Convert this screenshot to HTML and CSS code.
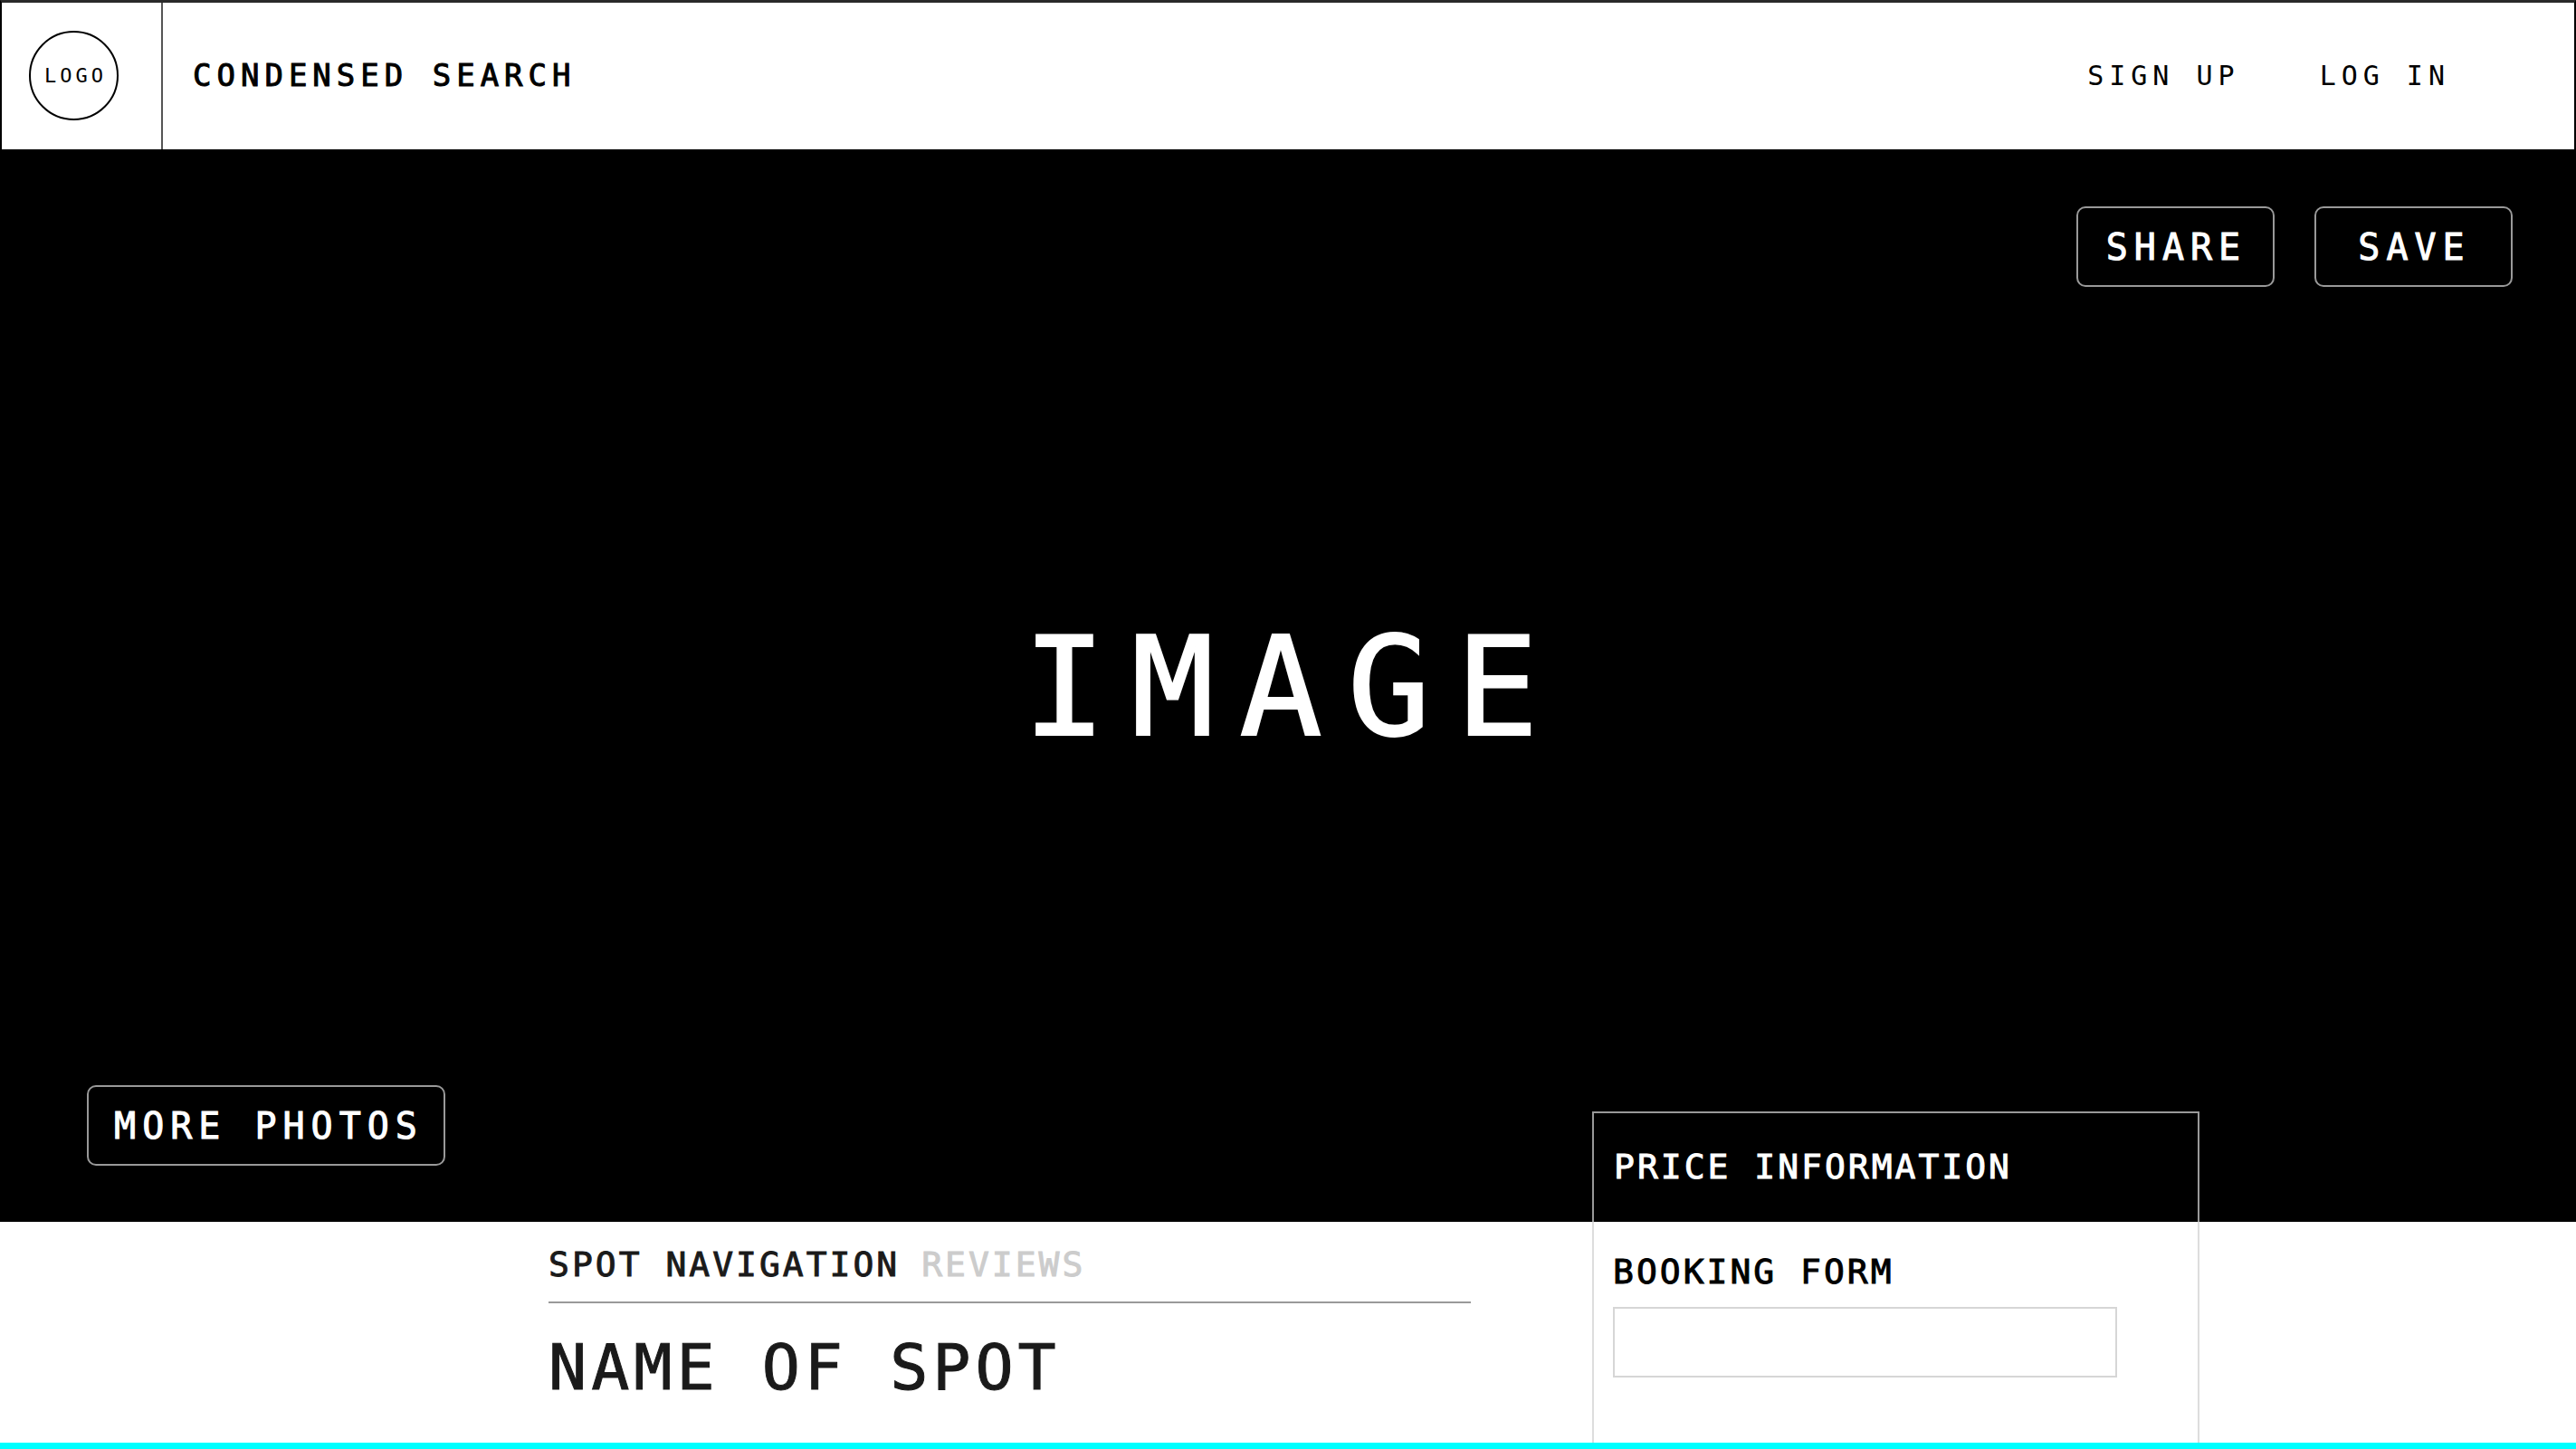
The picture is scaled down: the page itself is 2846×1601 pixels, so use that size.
FILE: index.html
```html
<!DOCTYPE html>
<html lang="en">
<head>
  <meta charset="utf-8">
  <meta name="viewport" content="width=device-width, initial-scale=1">
  <title>Name of Spot</title>
  <link rel="stylesheet" href="styles.css">
</head>
<body>
  <header class="site-header">
    <div class="brand"><a class="logo" href="#">LOGO</a></div>
    <a class="search" href="#">CONDENSED SEARCH</a>
    <nav class="account">
      <a href="#">SIGN UP</a>
      <a href="#">LOG IN</a>
    </nav>
  </header>

  <section class="hero">
    <div class="hero-actions">
      <button class="button" type="button">SHARE</button>
      <button class="button" type="button">SAVE</button>
    </div>
    <div class="hero-title">IMAGE</div>
    <div class="hero-more">
      <button class="button button-wide" type="button">MORE PHOTOS</button>
    </div>
  </section>

  <main class="content">
    <section class="spot">
      <nav class="spot-nav">
        <a href="#">SPOT NAVIGATION</a>
        <a class="muted" href="#">REVIEWS</a>
      </nav>
      <h1 class="spot-name">NAME OF SPOT</h1>
    </section>
    <aside class="booking">
      <h2 class="price">PRICE INFORMATION</h2>
      <form class="booking-form">
        <label for="booking">BOOKING FORM</label>
        <input id="booking" type="text">
      </form>
    </aside>
  </main>

  <footer class="accent"></footer>
</body>
</html>
```

FILE: styles.css
```css
* {
  box-sizing: border-box;
}

body {
  margin: 0;
  min-height: 100vh;
  display: flex;
  flex-direction: column;
  background: #fff;
  color: #000;
  font-family: "DejaVu Sans Mono", "Liberation Mono", monospace;
  -webkit-text-stroke: 1px currentColor;
}

a {
  color: inherit;
  text-decoration: none;
}

/* Header */
.site-header {
  display: flex;
  align-items: stretch;
  height: 167px;
  padding-bottom: 2px;
  border: 2px solid #000;
  border-top: 3px solid #2a2a2a;
  -webkit-text-stroke-width: 0;
}

.brand {
  display: flex;
  align-items: center;
  margin-bottom: -2px;
  padding: 0 47px 2px 30px;
  border-right: 2px solid #555;
}

.logo {
  display: flex;
  align-items: center;
  justify-content: center;
  width: 99px;
  height: 99px;
  padding-left: 4px;
  border: 2px solid #000;
  border-radius: 50%;
  font-size: 22px;
  letter-spacing: 4px;
}

.search {
  display: flex;
  align-items: center;
  margin-left: 33px;
  font-size: 34px;
  letter-spacing: 6px;
  -webkit-text-stroke-width: 1px;
}

.account {
  display: flex;
  align-items: center;
  gap: 88px;
  margin-left: auto;
  padding-right: 137px;
  font-size: 30px;
  letter-spacing: 6px;
}

/* Hero */
.hero {
  display: grid;
  grid-template-rows: 1fr auto 1fr;
  min-height: 1183px;
  padding: 61px 70px 62px 96px;
  background: #000;
  color: #fff;
}

.hero-actions {
  display: flex;
  align-items: flex-start;
  justify-content: flex-end;
  gap: 44px;
}

.hero-title {
  padding: 4px 14px 0 0;
  text-align: center;
  font-size: 152px;
  line-height: 176px;
  letter-spacing: 28px;
  -webkit-text-stroke-width: 2px;
}

.hero-more {
  display: flex;
  align-items: flex-end;
}

.button {
  width: 219px;
  height: 89px;
  padding: 0 0 0 2px;
  border: 2px solid #999;
  border-radius: 10px;
  background: transparent;
  color: inherit;
  font-family: inherit;
  font-size: 40px;
  letter-spacing: 7px;
}

.button-wide {
  width: 396px;
  padding-left: 6px;
}

/* Spot details and booking card */
.content {
  flex: 1;
  display: grid;
  grid-template-columns: 606fr 1019fr 134fr 671fr 416fr;
}

.spot {
  grid-column: 2;
  color: #1a1a1a;
}

.spot-nav {
  display: flex;
  gap: 24px;
  padding: 24px 0 18px;
  border-bottom: 2px solid #999;
  font-size: 38px;
  line-height: 46px;
  letter-spacing: 3px;
}

.muted {
  color: #ccc;
}

.spot-name {
  margin: 30px 0;
  font-size: 70px;
  font-weight: 400;
  line-height: 82px;
  letter-spacing: 5px;
}

.booking {
  grid-column: 4;
  display: flex;
  flex-direction: column;
  margin-top: -122px;
  font-size: 38px;
  line-height: 46px;
  letter-spacing: 3px;
}

.price {
  height: 122px;
  margin: 0;
  padding: 36px 22px;
  border: 2px solid #999;
  border-bottom: 0;
  color: #fff;
  font-size: inherit;
  font-weight: 400;
}

.booking-form {
  flex: 1;
  display: flex;
  flex-direction: column;
  gap: 16px;
  padding: 32px 89px 0 21px;
  border: 2px solid #ddd;
  border-width: 0 2px;
}

.booking-form input {
  width: 100%;
  height: 78px;
  padding: 0 16px;
  border: 2px solid #d6d6d6;
  border-radius: 0;
  background: #fff;
  font: inherit;
}

.accent {
  height: 7px;
  background: #0ff;
}
```
